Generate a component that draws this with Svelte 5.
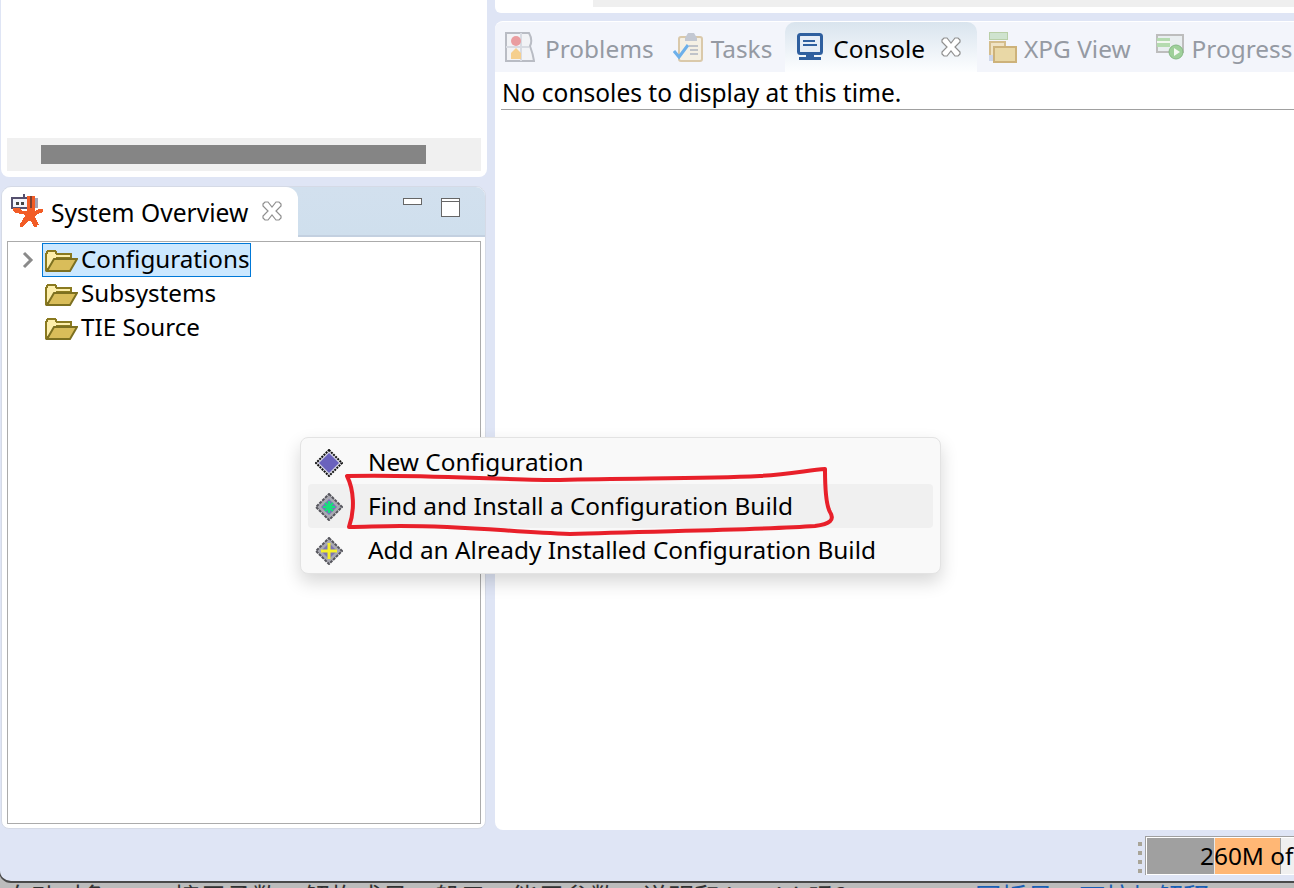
<script>
  const tree = [
    { label: 'Configurations', selected: true, arrow: true },
    { label: 'Subsystems' },
    { label: 'TIE Source' }
  ];
  const menu = [
    { label: 'New Configuration', kind: 'new' },
    { label: 'Find and Install a Configuration Build', kind: 'find', hover: true },
    { label: 'Add an Already Installed Configuration Build', kind: 'add' }
  ];
  const tabs = [
    { label: 'Problems', icon: 'problems' },
    { label: 'Tasks', icon: 'tasks' },
    { label: 'Console', icon: 'console', active: true },
    { label: 'XPG View', icon: 'xpg' },
    { label: 'Progress', icon: 'progress' }
  ];
</script>

{#snippet closeIcon()}
  <svg class="close" width="22" height="22" viewBox="0 0 22 22">
    <path d="M2 4 L4 2 L7 2 L11 7 L15 2 L18 2 L20 4 L20 6 L15 11 L20 16 L20 18 L18 20 L15 20 L11 15 L7 20 L4 20 L2 18 L2 16 L7 11 L2 6 Z" fill="#fff" stroke="#8f8f8f" stroke-width="1.2"/>
  </svg>
{/snippet}

{#snippet folder()}
  <svg class="folder" width="33" height="24" viewBox="0 0 33 24" shape-rendering="crispEdges">
    <path d="M1 6 L3 3 L10 3 L12 6 L26 6 L26 10 L12 10 L6 20 L1 22 Z" fill="#fdeeaa" stroke="#8a7a20" stroke-width="2"/>
    <path d="M2 23 L9 11 L32 11 L25 23 Z" fill="#d9bd5a" stroke="#7d7020" stroke-width="2" shape-rendering="auto"/>
  </svg>
{/snippet}

{#snippet diamond(kind)}
  <svg width="28" height="28" viewBox="0 0 28 28">
    {#if kind === 'new'}
      <path d="M14 1 L27 14 L14 27 L1 14 Z" fill="#d8d8e4" stroke="#111" stroke-width="2" stroke-dasharray="2 1"/>
      <path d="M14 4 L24 14 L14 24 L4 14 Z" fill="#6a62bd"/>
    {:else}
      <path d="M14 1 L27 14 L14 27 L1 14 Z" fill="#a9a9b2" stroke="#55555c" stroke-width="2" stroke-dasharray="3 1"/>
      <path d="M14 6 L22 14 L14 22 L6 14 Z" fill="#7a74b8"/>
    {/if}
    {#if kind === 'find'}
      <path d="M14 8 V20 M8 14 H20 M10 10 L18 18 M18 10 L10 18" stroke="#17e07a" stroke-width="2.2"/>
    {:else if kind === 'add'}
      <path d="M14 6 V22 M6 14 H22" stroke="#f6f02a" stroke-width="3"/>
    {/if}
  </svg>
{/snippet}

{#snippet tabIcon(name)}
  {#if name === 'problems'}
    <svg width="30" height="30" viewBox="0 0 30 30">
      <path d="M1 1 H24 Q28 8 25 14 Q28 22 29 29 H1 Z" fill="#f2f3f6" stroke="#b9bcc4" stroke-width="2"/>
      <path d="M1 15 H24 M16 1 V29" stroke="#d8dbe2" stroke-width="2"/>
      <circle cx="11" cy="9" r="5" fill="#ea9da0"/>
      <path d="M11 16 L16 21 V27 H6 V21 Z" fill="#f5cf8e"/>
    </svg>
  {:else if name === 'tasks'}
    <svg width="30" height="30" viewBox="0 0 30 30">
      <rect x="6" y="5" width="23" height="24" rx="2" fill="#f5f0e4" stroke="#dac9aa" stroke-width="2"/>
      <path d="M12 6 L15 1 H21 L24 6 V9 H12 Z" fill="#c3c8d2"/>
      <path d="M16 14 H25 M17 18 H25 M17 22 H25" stroke="#aeb4c0" stroke-width="1.5"/>
      <path d="M1 19 L6 25 L15 13" fill="none" stroke="#6db0ea" stroke-width="3"/>
    </svg>
  {:else if name === 'console'}
    <svg width="26" height="28" viewBox="0 0 26 28">
      <rect x="1.5" y="1.5" width="23" height="19" rx="2" fill="#e6edf7" stroke="#2f5f9f" stroke-width="3"/>
      <path d="M6 8 H18 M6 12 H20" stroke="#2f5f9f" stroke-width="2"/>
      <path d="M9 21 H17 V24 H9 Z M2 24 H24 V27 H2 Z" fill="#2f5f9f"/>
    </svg>
  {:else if name === 'xpg'}
    <svg width="28" height="32" viewBox="0 0 28 32" shape-rendering="crispEdges">
      <rect x="0" y="1" width="18" height="7" fill="#cfe3cf" stroke="#b9cfa8" stroke-width="1"/>
      <rect x="1" y="11" width="15" height="17" fill="#f0e3c4" stroke="#d4bd8c" stroke-width="2"/>
      <rect x="5" y="16" width="22" height="15" fill="#e9d8a6" stroke="#cdb27a" stroke-width="2"/>
      <rect x="0" y="24" width="4" height="6" fill="#cdd6ea"/>
    </svg>
  {:else}
    <svg width="28" height="26" viewBox="0 0 28 26">
      <rect x="1" y="1" width="26" height="17" fill="#e9eef0" stroke="#bdbdbd" stroke-width="2"/>
      <rect x="1" y="4" width="13" height="9" fill="#b5dbb0"/>
      <rect x="1" y="7" width="13" height="2" fill="#f2f7f0"/>
      <circle cx="20" cy="18" r="7" fill="#9fd09a" stroke="#86b884" stroke-width="1"/>
      <path d="M18 14 L24 18 L18 22 Z" fill="#f5f9f3"/>
    </svg>
  {/if}
{/snippet}

<div class="window">
  <div class="workspace">
    <div class="left">
      <div class="outline-panel">
        <div class="hscroll"><div class="thumb"></div></div>
      </div>
      <section class="overview">
        <header class="view-tabs">
          <div class="view-tab">
            <svg width="33" height="34" viewBox="0 0 33 34" shape-rendering="crispEdges">
              <rect x="1" y="4" width="16" height="10" fill="#f4f4fa" stroke="#55506e" stroke-width="2"/>
              <rect x="5" y="8" width="3" height="3" fill="#444"/>
              <rect x="10" y="8" width="3" height="3" fill="#444"/>
              <rect x="12" y="0" width="2" height="4" fill="#55506e"/>
              <rect x="24" y="4" width="3" height="10" fill="#a5a3b5"/>
              <rect x="16" y="2" width="8" height="16" fill="#f25c26"/>
              <rect x="19" y="2" width="2" height="12" fill="#7d4030"/>
              <path d="M2 14 H8 L12 17 H24 L28 15 H32 V18 L26 20 L24 23 L28 31 H26 V33 H23 L20 27 H17 L12 33 H9 V30 L14 22 L12 20 L4 19 L2 17 Z" fill="#f25c26"/>
            </svg>
            <span class="view-title">System Overview</span>
            {@render closeIcon()}
          </div>
          <div class="view-controls">
            <span class="min-btn"></span>
            <span class="max-btn"></span>
          </div>
        </header>
        <div class="tree-wrap">
          <ul class="tree">
            {#each tree as node}
              <li class="node">
                <span class="arrow">
                  {#if node.arrow}
                    <svg width="12" height="18" viewBox="0 0 12 18"><path d="M2 2 L9 9 L2 16" fill="none" stroke="#8a8a8a" stroke-width="3"/></svg>
                  {/if}
                </span>
                <span class="node-label" class:selected={node.selected}>
                  {@render folder()}
                  <span class="node-text">{node.label}</span>
                </span>
              </li>
            {/each}
          </ul>
        </div>
      </section>
    </div>

    <div class="right">
      <div class="editor-stub"><div class="editor-scroll"></div></div>
      <section class="console-panel">
        <nav class="panel-tabs">
          {#each tabs as tab}
            <div class="panel-tab {tab.icon}" class:active={tab.active}>
              <span class="tab-icon">{@render tabIcon(tab.icon)}</span>
              <span class="tab-label">{tab.label}</span>
              {#if tab.active}{@render closeIcon()}{/if}
            </div>
          {/each}
        </nav>
        <div class="console-msg">No consoles to display at this time.</div>
      </section>
    </div>
  </div>

  <footer class="status">
    <div class="grip"><i></i><i></i><i></i><i></i></div>
    <div class="heap">
      <div class="heap-used"></div>
      <div class="heap-extra"></div>
      <div class="heap-rest"></div>
      <span class="heap-text">260M of 512M</span>
    </div>
  </footer>
</div>

<div class="behind">自动对象，　　接用函数，解构成员一般只，能用参数，说明和 in with吗？<span class="link">圆括号，下拉加解释</span></div>

<div class="menu">
  {#each menu as item}
    <div class="menu-item" class:hover={item.hover}>
      <span class="menu-icon">{@render diamond(item.kind)}</span>
      <span class="menu-label">{item.label}</span>
    </div>
  {/each}
</div>

<svg class="scribble" width="1294" height="888" viewBox="0 0 1294 888">
  <path d="M347 476 C420 474 500 480 560 480 C640 478 700 479 760 476 C790 474 810 470 825 469 C825 490 826 505 830 512 C835 520 830 524 815 526 C760 530 650 531 570 534 C510 532 470 526 400 526 C380 526 365 527 349 527 C355 510 354 490 347 476 Z" fill="none" stroke="#e8202a" stroke-width="4" stroke-linejoin="round"/>
</svg>

<style>
  :global(body) {
    margin: 0;
    background: #bcbcbc;
    overflow: hidden;
  }
  * {
    box-sizing: border-box;
  }
  .window {
    width: 1295px;
    height: 883px;
    margin-left: -1px;
    background: #dfe5f5;
    border-bottom: 2px solid #4a4a4a;
    border-left: 1px solid #4a4a4a;
    border-bottom-left-radius: 12px;
    overflow: hidden;
    font-family: "Noto Sans", sans-serif;
    font-size: 24.4px;
    color: #000;
  }
  .workspace {
    display: flex;
    height: 830px;
    gap: 8px;
  }
  .left {
    width: 487px;
    flex: none;
    display: flex;
    flex-direction: column;
    gap: 9px;
  }
  .outline-panel {
    height: 177px;
    background: #fff;
    margin-left: 1px;
    border-bottom-right-radius: 8px;
    border-bottom-left-radius: 8px;
    padding: 138px 6px 6px 6px;
  }
  .hscroll {
    height: 33px;
    background: #f0f0f0;
    padding: 7px 55px 7px 34px;
  }
  .thumb {
    height: 19px;
    background: #858585;
  }
  .overview {
    height: 643px;
    margin-left: 1px;
    margin-right: 1px;
    background: #fff;
    border: 1px solid #d5dae6;
    border-radius: 10px 10px 8px 8px;
    overflow: hidden;
    display: flex;
    flex-direction: column;
  }
  .view-tabs {
    height: 50px;
    flex: none;
    display: flex;
    background: linear-gradient(#d2e0ee, #cfdfed);
    border-bottom: 2px solid #c3d0e0;
  }
  .view-tab {
    width: 296px;
    height: 50px;
    background: #fff;
    border-radius: 0 12px 0 0;
    display: flex;
    align-items: center;
    padding: 0 0 2px 9px;
    flex: none;
  }
  .view-title {
    margin-left: 7px;
    padding-top: 2px;
    font-size: 24.6px;
  }
  .close {
    margin-left: 13px;
    flex: none;
  }
  .view-controls {
    flex: 1;
    display: flex;
    align-items: flex-start;
    padding: 11px 0 0 105px;
    gap: 19px;
  }
  .min-btn {
    width: 19px;
    height: 7px;
    background: #fff;
    border: 1px solid #666;
  }
  .max-btn {
    width: 19px;
    height: 19px;
    border: 1px solid #666;
    background: linear-gradient(#fff 2px, #666 2px, #666 3px, #fff 3px);
  }
  .tree-wrap {
    flex: 1;
    margin: 4px 4px 4px 5px;
    border: 1px solid #ababab;
    overflow: hidden;
  }
  .tree {
    list-style: none;
    margin: 0;
    padding: 1px 0 0 0;
  }
  .node {
    height: 34px;
    display: flex;
    align-items: center;
  }
  .arrow {
    width: 34px;
    padding-left: 14px;
    display: flex;
    align-items: center;
    flex: none;
  }
  .node-label {
    display: flex;
    align-items: center;
    height: 34px;
    border: 1px solid transparent;
    padding-left: 2px;
    padding-right: 1px;
  }
  .node-label.selected {
    background: #cce8ff;
    border-color: #0078d7;
  }
  .folder {
    margin-top: -1px;
  }
  .node-text {
    margin-left: 3px;
    padding-bottom: 2px;
    font-size: 24.2px;
    line-height: 30px;
  }
  .right {
    flex: 1;
    display: flex;
    flex-direction: column;
    gap: 8px;
  }
  .editor-stub {
    height: 13px;
    background: #fff;
    flex: none;
    padding-left: 98px;
    border-bottom-left-radius: 6px;
  }
  .editor-scroll {
    height: 7px;
    background: #efefef;
  }
  .console-panel {
    height: 809px;
    background: #fff;
    border-top-left-radius: 8px;
    border-bottom-left-radius: 8px;
    border-top: 1px solid #fff;
    display: flex;
    flex-direction: column;
    overflow: hidden;
  }
  .panel-tabs {
    height: 50px;
    flex: none;
    display: flex;
    background: #f3f5fb;
    align-items: stretch;
    padding-left: 9px;
    white-space: nowrap;
    color: #959aa3;
  }
  .panel-tab {
    display: flex;
    align-items: center;
    padding: 0 17px 0 1px;
  }
  .tab-icon {
    display: flex;
    align-items: center;
    margin-right: 10px;
  }
  .tab-label {
    padding-top: 2px;
  }
  .panel-tab.tasks {
    padding-left: 2px;
    padding-right: 13px;
  }
  .tasks .tab-icon {
    margin-right: 8px;
  }
  .panel-tab.active {
    color: #000;
    background: linear-gradient(#d9e4ee, #fdfeff);
    border-radius: 10px 10px 0 0;
    padding: 0 15px 0 12px;
    margin: 0 11px 0 0;
  }
  .panel-tab.active .close {
    margin-left: 15px;
  }
  .panel-tab.xpg {
    padding-right: 24px;
  }
  .xpg .tab-icon {
    margin-right: 7px;
  }
  .progress .tab-icon {
    margin-right: 8px;
  }
  .console-msg {
    margin-left: 6px;
    padding: 4px 0 0 1px;
    height: 38px;
    line-height: 34px;
    font-size: 24.5px;
    border-bottom: 1px solid #a0a0a0;
    white-space: nowrap;
  }
  .status {
    height: 51px;
    display: flex;
    justify-content: flex-end;
    align-items: flex-start;
    padding-top: 6px;
    overflow: hidden;
  }
  .grip {
    display: flex;
    flex-direction: column;
    gap: 5px;
    margin: 6px 3px 0 0;
  }
  .grip i {
    display: block;
    width: 4px;
    height: 4px;
    background: #a9a598;
  }
  .heap {
    position: relative;
    width: 149px;
    flex: none;
    height: 39px;
    display: flex;
    border: 1px solid #a0a0a0;
    border-width: 1px 0 0 1px;
    padding: 1px 0 1px 1px;
    background: #fff;
    overflow: hidden;
  }
  .heap-used {
    width: 68px;
    background: #a0a0a0;
    border-right: 1px solid #e8e8e8;
  }
  .heap-extra {
    width: 66px;
    background: #ffb775;
    border-right: 1px solid #a0a0a0;
  }
  .heap-rest {
    flex: 1;
    background: #f0f0f0;
  }
  .heap-text {
    position: absolute;
    left: 54px;
    top: 0;
    line-height: 37px;
    white-space: nowrap;
  }
  .behind {
    height: 5px;
    padding-left: 5px;
    overflow: hidden;
    font-family: "Noto Sans CJK SC", sans-serif;
    font-size: 26px;
    line-height: 26px;
    color: #333;
    white-space: nowrap;
  }
  .link {
    margin-left: 115px;
    color: #1a5fb4;
  }
  .menu {
    position: absolute;
    left: 300px;
    top: 437px;
    width: 641px;
    height: 137px;
    background: #f9f9f9;
    border: 1px solid #e3e3e3;
    border-radius: 8px;
    box-shadow: 0 8px 18px rgba(0, 0, 0, 0.16);
    padding: 2px 7px;
    font-family: "Noto Sans", sans-serif;
    font-size: 24.4px;
  }
  .menu-item {
    height: 44px;
    display: flex;
    align-items: center;
    border-radius: 4px;
    padding-left: 7px;
    white-space: nowrap;
  }
  .menu-item.hover {
    background: #f0f0f0;
  }
  .menu-icon {
    display: flex;
    width: 53px;
    flex: none;
    margin-top: 1px;
  }
  .menu-label {
    padding-bottom: 2px;
  }
  .scribble {
    position: absolute;
    left: 0;
    top: 0;
    pointer-events: none;
  }
</style>
